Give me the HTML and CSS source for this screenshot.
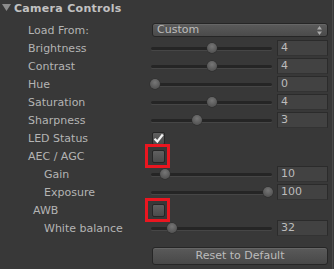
FILE: index.html
```html
<!DOCTYPE html>
<html>
<head>
<meta charset="utf-8">
<link rel="stylesheet" href="styles.css">
</head>
<body>
<div class="panel">
  <div class="header">
    <svg class="fold" width="9" height="7" viewBox="0 0 9 7"><polygon points="0,0 9,0 4.5,7" fill="#8c8c8c"/></svg>
    <span class="title">Camera Controls</span>
  </div>
  <div class="rows">
    <div class="label">Load From:</div>
    <div class="ctrl"><div class="dropdown"><span>Custom</span>
      <svg width="5" height="9" viewBox="0 0 5 9"><polygon points="2.5,0 5,3.5 0,3.5" fill="#aaa"/><polygon points="0,5.5 5,5.5 2.5,9" fill="#aaa"/></svg></div></div>

    <div class="label">Brightness</div>
    <div class="ctrl"><div class="slider"><div class="track"></div><div class="thumb" style="--p:0.504"></div></div><div class="field">4</div></div>

    <div class="label">Contrast</div>
    <div class="ctrl"><div class="slider"><div class="track"></div><div class="thumb" style="--p:0.504"></div></div><div class="field">4</div></div>

    <div class="label">Hue</div>
    <div class="ctrl"><div class="slider"><div class="track"></div><div class="thumb" style="--p:0"></div></div><div class="field">0</div></div>

    <div class="label">Saturation</div>
    <div class="ctrl"><div class="slider"><div class="track"></div><div class="thumb" style="--p:0.504"></div></div><div class="field">4</div></div>

    <div class="label">Sharpness</div>
    <div class="ctrl"><div class="slider"><div class="track"></div><div class="thumb" style="--p:0.372"></div></div><div class="field">3</div></div>

    <div class="label">LED Status</div>
    <div class="ctrl"><div class="check"><svg width="11" height="11" viewBox="0 0 11 11"><path d="M1.5 5.8 L4.3 8.6 L9.8 1.5" fill="none" stroke="#f2f2f2" stroke-width="2.2"/></svg></div></div>

    <div class="label">AEC / AGC</div>
    <div class="ctrl"><div class="check"><div class="mark"></div></div></div>

    <div class="label sub">Gain</div>
    <div class="ctrl"><div class="slider"><div class="track"></div><div class="thumb" style="--p:0.09"></div></div><div class="field">10</div></div>

    <div class="label sub">Exposure</div>
    <div class="ctrl"><div class="slider"><div class="track"></div><div class="thumb" style="--p:1"></div></div><div class="field">100</div></div>

    <div class="label mid">AWB</div>
    <div class="ctrl"><div class="check"><div class="mark"></div></div></div>

    <div class="label sub">White balance</div>
    <div class="ctrl"><div class="slider"><div class="track"></div><div class="thumb" style="--p:0.15"></div></div><div class="field">32</div></div>

    <div class="spacer"></div>
    <div class="btnrow"><div class="button">Reset to Default</div></div>
  </div>
  <div class="scrollbar"></div>
</div>
</body>
</html>
```
FILE: styles.css
```css
html, body {
  margin: 0;
  padding: 0;
}
body {
  width: 334px;
  height: 269px;
  background: #383838;
  font-family: "DejaVu Sans", sans-serif;
  font-size: 11px;
  color: #b4b4b4;
  overflow: hidden;
}
.panel {
  position: relative;
  height: 269px;
  padding-right: 8px;
}
.header {
  height: 16px;
  display: flex;
  align-items: center;
  padding-left: 2px;
  gap: 3px;
}
.fold {
  margin-top: -2px;
}
.title {
  font-weight: bold;
  color: #c2c2c2;
  letter-spacing: 0.3px;
}
.rows {
  margin-top: 5px;
  display: grid;
  grid-template-columns: 151px 1fr;
  grid-auto-rows: 18px;
}
.label {
  padding-left: 28px;
  line-height: 19px;
  white-space: nowrap;
}
.label.sub {
  padding-left: 44px;
}
.label.mid {
  padding-left: 33px;
}
.ctrl {
  display: flex;
  align-items: center;
}
.dropdown {
  margin-left: 1px;
  flex: 1;
  height: 12px;
  border: 1px solid #262626;
  border-radius: 3px;
  background: linear-gradient(#5b5b5b, #4b4b4b);
  box-shadow: inset 0 1px 0 #666;
  display: flex;
  align-items: center;
  justify-content: space-between;
  padding: 0 5px 0 4px;
  color: #bdbdbd;
  line-height: 12px;
}
.slider {
  position: relative;
  width: 121px;
  height: 10px;
  display: flex;
  align-items: center;
}
.track {
  width: 100%;
  height: 3px;
  border-radius: 2px;
  background: #252525;
  box-shadow: 0 1px 0 #464646;
}
.thumb {
  position: absolute;
  top: 0;
  left: calc(var(--p) * 113px - 1px);
  width: 10px;
  height: 10px;
  border-radius: 50%;
  background: radial-gradient(circle at 50% 35%, #767676, #555555 70%);
  box-shadow: 0 0 0 0.5px #2c2c2c;
}
.field {
  margin-left: 5px;
  width: 46px;
  height: 14px;
  border: 1px solid #2b2b2b;
  border-bottom-color: #333;
  background: #424242;
  padding-left: 3px;
  line-height: 14px;
  color: #bcbcbc;
}
.check {
  position: relative;
  margin-left: 1px;
  width: 11px;
  height: 11px;
  border: 1px solid #262626;
  border-radius: 2px;
  background: linear-gradient(#606060, #4b4b4b);
  display: flex;
  align-items: center;
  justify-content: center;
}
.mark {
  position: absolute;
  left: -8px;
  top: -7px;
  width: 19px;
  height: 18px;
  border: 3px solid #ea1620;
}
.spacer {
  grid-column: 1;
  height: 27px;
}
.btnrow {
  display: flex;
  align-items: flex-end;
  height: 27px;
}
.button {
  margin-left: 1px;
  flex: 1;
  height: 16px;
  margin-bottom: -1px;
  border: 1px solid #262626;
  border-radius: 3px;
  background: linear-gradient(#5a5a5a, #484848);
  box-shadow: inset 0 1px 0 #666;
  text-align: center;
  line-height: 16px;
  color: #bcbcbc;
}
.scrollbar {
  position: absolute;
  right: 1px;
  top: 0;
  width: 1px;
  height: 269px;
  background: #4a4a4a;
}
```
